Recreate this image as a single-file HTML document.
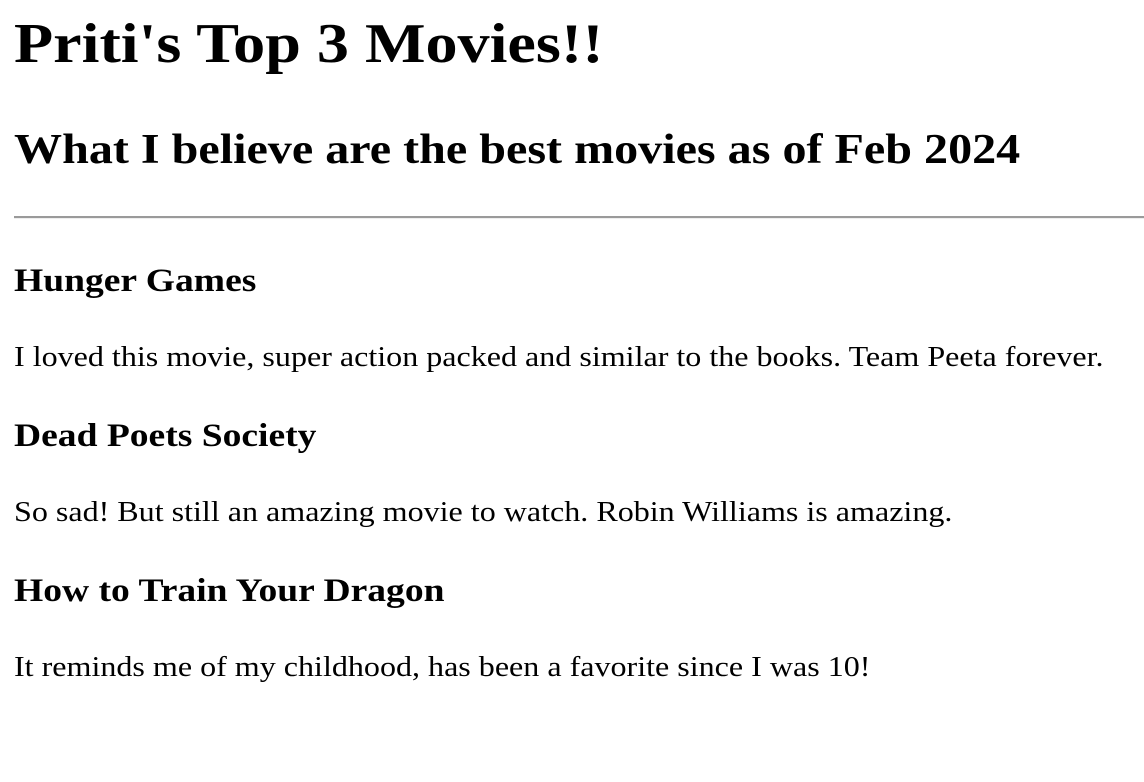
<!DOCTYPE html>
<html><head><meta charset="utf-8"><style>
body{margin:0;background:#fff;width:1144px;height:782px;overflow:hidden;position:relative;font-family:"Liberation Serif",serif;color:#000}
div{position:absolute;left:14px;line-height:1;white-space:nowrap;transform:scaleX(1.145);transform-origin:0 0}
.h1{font-size:56px;font-weight:bold}
.h2{font-size:42px;font-weight:bold}
.h3{font-size:32.8px;font-weight:bold}
.p{font-size:28px}
.hr{top:216px;left:14px;width:1130px;height:0;border-top:2px solid #9a9a9a;border-bottom:1px solid #eee;transform:none}
</style></head><body>
<div class="h1" style="top:16px">Priti's Top 3 Movies!!</div>
<div class="h2" style="top:129px">What I believe are the best movies as of Feb 2024</div>
<div class="hr"></div>
<div class="h3" style="top:264.5px">Hunger Games</div>
<div class="p" style="top:343.5px">I loved this movie, super action packed and similar to the books. Team Peeta forever.</div>
<div class="h3" style="top:419.5px">Dead Poets Society</div>
<div class="p" style="top:498.5px">So sad! But still an amazing movie to watch. Robin Williams is amazing.</div>
<div class="h3" style="top:574.5px">How to Train Your Dragon</div>
<div class="p" style="top:653.5px">It reminds me of my childhood, has been a favorite since I was 10!</div>
</body></html>
